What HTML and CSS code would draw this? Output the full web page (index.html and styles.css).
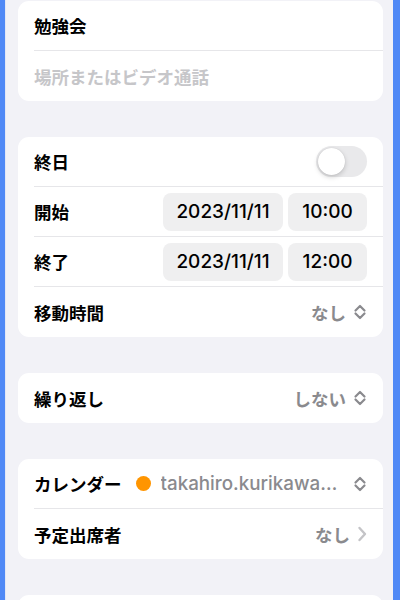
FILE: index.html
```html
<!DOCTYPE html>
<html>
<head>
    <meta charset="utf-8">
    <title>新規イベント</title>
    <link rel="stylesheet" href="styles.css">
</head>
<body>
    <div class="screen">
        <div class="card">
            <div class="row">
                <span class="label">勉強会</span>
            </div>
            <div class="row">
                <span class="placeholder">場所またはビデオ通話</span>
            </div>
        </div>

        <div class="card">
            <div class="row">
                <span class="label">終日</span>
                <div class="toggle"><div class="knob"></div></div>
            </div>
            <div class="row">
                <span class="label">開始</span>
                <div class="pills">
                    <span class="pill pill-date">2023/11/11</span>
                    <span class="pill pill-time">10:00</span>
                </div>
            </div>
            <div class="row">
                <span class="label">終了</span>
                <div class="pills">
                    <span class="pill pill-date">2023/11/11</span>
                    <span class="pill pill-time">12:00</span>
                </div>
            </div>
            <div class="row">
                <span class="label">移動時間</span>
                <div class="value">
                    <span>なし</span>
                    <svg class="updown" width="14" height="16" viewBox="0 0 14 16"><path d="M2.5 6.5L7 2L11.5 6.5M2.5 9.5L7 14L11.5 9.5"/></svg>
                </div>
            </div>
        </div>

        <div class="card">
            <div class="row">
                <span class="label">繰り返し</span>
                <div class="value">
                    <span>しない</span>
                    <svg class="updown" width="14" height="16" viewBox="0 0 14 16"><path d="M2.5 6.5L7 2L11.5 6.5M2.5 9.5L7 14L11.5 9.5"/></svg>
                </div>
            </div>
        </div>

        <div class="card">
            <div class="row">
                <span class="label">カレンダー</span>
                <div class="value calendar">
                    <span class="dot"></span>
                    <span class="account">takahiro.kurikawa…</span>
                    <svg class="updown" width="14" height="16" viewBox="0 0 14 16"><path d="M2.5 6.5L7 2L11.5 6.5M2.5 9.5L7 14L11.5 9.5"/></svg>
                </div>
            </div>
            <div class="row">
                <span class="label">予定出席者</span>
                <div class="value">
                    <span>なし</span>
                    <svg class="chevron" width="10" height="16" viewBox="0 0 10 16"><path d="M2.5 2L8 8L2.5 14"/></svg>
                </div>
            </div>
        </div>

        <div class="card"></div>
    </div>
</body>
</html>
```

FILE: styles.css
```css
body {
    margin: 0;
    background-color: #5089f6;
    font-family: Inter, "Noto Sans CJK JP", sans-serif;
    color: #000;
}
.screen {
    margin: 0 7px 0 5px;
    height: 600px;
    padding: 1px 10px 0 12px;
    background-color: #f2f2f7;
    border-left: 1px solid #e3e8f6;
    box-sizing: border-box;
    overflow: hidden;
    display: flex;
    flex-direction: column;
    gap: 36px;
}
.card {
    background: #fff;
    border-radius: 11px;
    padding-left: 16px;
    flex-shrink: 0;
}
.card:last-child {
    height: 40px;
}
.row {
    height: 50px;
    display: flex;
    align-items: center;
    justify-content: space-between;
    padding-right: 16px;
    border-bottom: 1px solid #e6e6e9;
    box-sizing: border-box;
}
.row:last-child {
    border-bottom: none;
}
.label {
    font-size: 17.5px;
    font-weight: 700;
    white-space: nowrap;
}
.placeholder {
    font-size: 17.5px;
    font-weight: 600;
    color: #c6c6c9;
}
.toggle {
    width: 51px;
    height: 31px;
    border-radius: 16px;
    background: #e9e9eb;
    padding: 2px;
    box-sizing: border-box;
    display: flex;
}
.knob {
    width: 27px;
    height: 27px;
    border-radius: 50%;
    background: #fff;
    box-shadow: 0 2px 5px rgba(0,0,0,0.18), 0 0 1px rgba(0,0,0,0.15);
}
.pills {
    display: flex;
    gap: 5px;
}
.pill {
    height: 38px;
    border-radius: 8px;
    background: #efeff0;
    display: flex;
    align-items: center;
    justify-content: center;
    font-size: 19px;
    font-weight: 500;
}
.pill-date {
    width: 120px;
}
.pill-time {
    width: 79px;
}
.value {
    display: flex;
    align-items: center;
    gap: 7px;
    font-size: 17.5px;
    font-weight: 600;
    color: #8a8a8e;
}
.calendar {
    flex: 1;
    gap: 10px;
    margin-left: 14px;
    min-width: 0;
    font-weight: 500;
    font-size: 18.8px;
}
.dot {
    width: 15px;
    height: 15px;
    border-radius: 50%;
    background: #ff9500;
    flex-shrink: 0;
}
.account {
    flex: 1;
    white-space: nowrap;
    overflow: hidden;
}
.updown path {
    fill: none;
    stroke: #8a8a8e;
    stroke-width: 2.2;
    stroke-linecap: round;
    stroke-linejoin: round;
}
.chevron path {
    fill: none;
    stroke: #c4c4c7;
    stroke-width: 2.4;
    stroke-linecap: round;
    stroke-linejoin: round;
}
```
